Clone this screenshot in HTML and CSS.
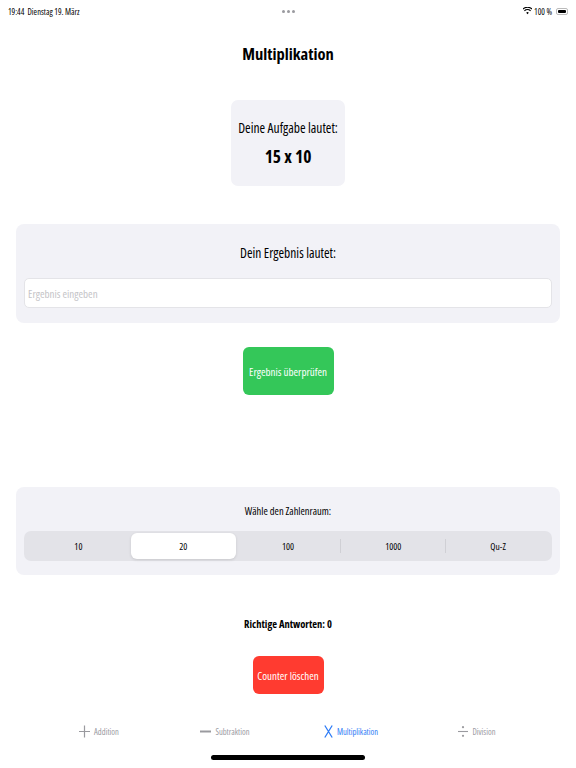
FILE: index.html
```html
<!DOCTYPE html>
<html lang="de">
<head>
  <meta charset="UTF-8">
  <title>Multiplikation</title>
  <link rel="stylesheet" href="styles.css">
</head>
<body>
  <div class="statusbar">
    <span class="zeit">19:44&nbsp;&nbsp;Dienstag 19. März</span>
    <span class="punkte"><i></i><i></i><i></i></span>
    <span class="rechts">
      <svg width="9" height="8" viewBox="0 0 18 14"><path d="M9 13.5l2.6-3a3.6 3.6 0 0 0-5.2 0z M3.6 7.6a7.6 7.6 0 0 1 10.8 0l1.6-1.8a10 10 0 0 0-14 0z M0.4 4a12.4 12.4 0 0 1 17.2 0l1.4-1.7a14.8 14.8 0 0 0-20 0z" fill="#000"/></svg>
      100 %
      <span class="akku"><span class="akku-fill"></span></span>
    </span>
  </div>

  <h1>Multiplikation</h1>

  <div class="aufgabe">
    <div class="aufgabe-label">Deine Aufgabe lautet:</div>
    <div class="aufgabe-wert">15 x 10</div>
  </div>

  <div class="karte ergebnis">
    <div class="karte-titel">Dein Ergebnis lautet:</div>
    <input type="text" class="eingabe" placeholder="Ergebnis eingeben">
  </div>

  <button class="btn gruen">Ergebnis überprüfen</button>

  <div class="karte zahlenraum">
    <div class="karte-titel klein">Wähle den Zahlenraum:</div>
    <div class="segmente">
      <div class="segment">10</div>
      <div class="segment aktiv">20</div>
      <div class="segment">100</div>
      <div class="segment trenner">1000</div>
      <div class="segment trenner">Qu-Z</div>
    </div>
  </div>

  <div class="zaehler">Richtige Antworten: 0</div>

  <button class="btn rot">Counter löschen</button>

  <div class="tabbar">
    <div class="tab">
      <svg width="11" height="13" viewBox="0 0 11 13"><path d="M5.5 0.5v12M0 6.5h11" stroke="#9a9a9f" stroke-width="1.2"/></svg>
      <span>Addition</span>
    </div>
    <div class="tab">
      <svg width="11" height="13" viewBox="0 0 11 13"><path d="M0 6.5h11" stroke="#9a9a9f" stroke-width="2"/></svg>
      <span>Subtraktion</span>
    </div>
    <div class="tab aktiv">
      <svg width="9" height="13" viewBox="0 0 9 13"><path d="M0.8 0.5l7.4 12M8.2 0.5l-7.4 12" stroke="#2f7cf6" stroke-width="1.3"/></svg>
      <span>Multiplikation</span>
    </div>
    <div class="tab">
      <svg width="10" height="13" viewBox="0 0 10 13"><path d="M0 6.5h10" stroke="#9a9a9f" stroke-width="1.1"/><circle cx="5" cy="2.2" r="1.1" fill="#9a9a9f"/><circle cx="5" cy="10.8" r="1.1" fill="#9a9a9f"/></svg>
      <span>Division</span>
    </div>
  </div>

  <div class="home"></div>
</body>
</html>
```

FILE: styles.css
```css
body {
  margin: 0;
  width: 576px;
  height: 768px;
  background: #fff;
  font-family: 'Open Sans', 'Roboto', sans-serif;
  font-stretch: condensed;
  color: #000;
  display: flex;
  flex-direction: column;
  align-items: center;
}
.statusbar {
  width: 100%;
  box-sizing: border-box;
  height: 22px;
  padding: 0 8px;
  display: flex;
  align-items: center;
  justify-content: space-between;
  font-size: 8.5px;
  font-weight: 500;
}
.zeit {
  width: 140px;
}
.punkte {
  display: flex;
  gap: 2px;
}
.punkte i {
  width: 3px;
  height: 3px;
  border-radius: 50%;
  background: #9a9a9f;
}
.rechts {
  width: 140px;
  display: flex;
  justify-content: flex-end;
  align-items: center;
  gap: 2px;
}
.akku {
  width: 12px;
  height: 7px;
  margin-left: 2px;
  border: 1px solid #bbb;
  border-radius: 2px;
  padding: 1px;
  box-sizing: border-box;
  display: flex;
}
.akku-fill {
  flex: 1;
  background: #000;
  border-radius: 1px;
}
h1 {
  margin: 21px 0 0;
  font-size: 16.5px;
  line-height: 22px;
  font-weight: 700;
}
.aufgabe {
  margin-top: 35px;
  width: 114px;
  box-sizing: border-box;
  padding: 19px 4px 20px;
  background: #f2f2f7;
  border-radius: 7px;
  text-align: center;
}
.aufgabe-label {
  font-size: 13.5px;
  line-height: 18px;
}
.aufgabe-wert {
  margin-top: 9px;
  font-size: 17.5px;
  line-height: 20px;
  font-weight: 700;
}
.karte {
  align-self: stretch;
  margin: 0 16px;
  background: #f2f2f7;
  border-radius: 8px;
  padding: 0 8px;
  text-align: center;
}
.ergebnis {
  margin-top: 38px;
  padding-top: 20px;
  padding-bottom: 15px;
}
.karte-titel {
  font-size: 13.5px;
  line-height: 18px;
}
.karte-titel.klein {
  font-size: 10.5px;
  line-height: 16px;
}
.eingabe {
  display: block;
  width: 100%;
  box-sizing: border-box;
  height: 30px;
  margin-top: 16px;
  padding: 0 3px;
  border: 1px solid #e4e4e8;
  border-radius: 5px;
  background: #fff;
  font-family: inherit;
  font-stretch: condensed;
  font-size: 11px;
}
.eingabe::placeholder {
  color: #c4c4c7;
}
.btn {
  border: none;
  color: #fff;
  font-family: inherit;
  font-stretch: condensed;
  font-size: 11px;
  border-radius: 6px;
  padding: 0;
}
.gruen {
  margin-top: 24px;
  width: 91px;
  height: 48px;
  background: #34c759;
}
.zahlenraum {
  margin-top: 92px;
  padding-top: 16px;
  padding-bottom: 14px;
}
.segmente {
  margin-top: 12px;
  height: 30px;
  background: #e3e3e8;
  border-radius: 7px;
  display: grid;
  grid-template-columns: repeat(5, 1fr);
  padding: 2px;
  box-sizing: border-box;
}
.segment {
  font-size: 9.5px;
  display: flex;
  align-items: center;
  justify-content: center;
  border-radius: 6px;
}
.segment.aktiv {
  background: #fff;
  box-shadow: 0 1px 3px rgba(0, 0, 0, 0.12);
}
.segment.trenner {
  border-left: 1px solid #d0d0d5;
  border-radius: 0;
  margin: 6px 0;
}
.zaehler {
  margin-top: 41px;
  font-size: 10.5px;
  line-height: 16px;
  font-weight: 700;
}
.rot {
  margin-top: 24px;
  width: 71px;
  height: 38px;
  background: #ff3b30;
}
.tabbar {
  margin-top: 26px;
  align-self: stretch;
  padding: 0 36px;
  display: grid;
  grid-template-columns: repeat(4, 1fr);
  height: 22px;
}
.tab {
  display: flex;
  align-items: center;
  justify-content: center;
  gap: 4px;
  font-size: 8.5px;
  color: #9a9a9f;
}
.tab.aktiv {
  color: #2f7cf6;
}
.home {
  margin-top: 13px;
  width: 154px;
  height: 5px;
  border-radius: 3px;
  background: #000;
}
```
